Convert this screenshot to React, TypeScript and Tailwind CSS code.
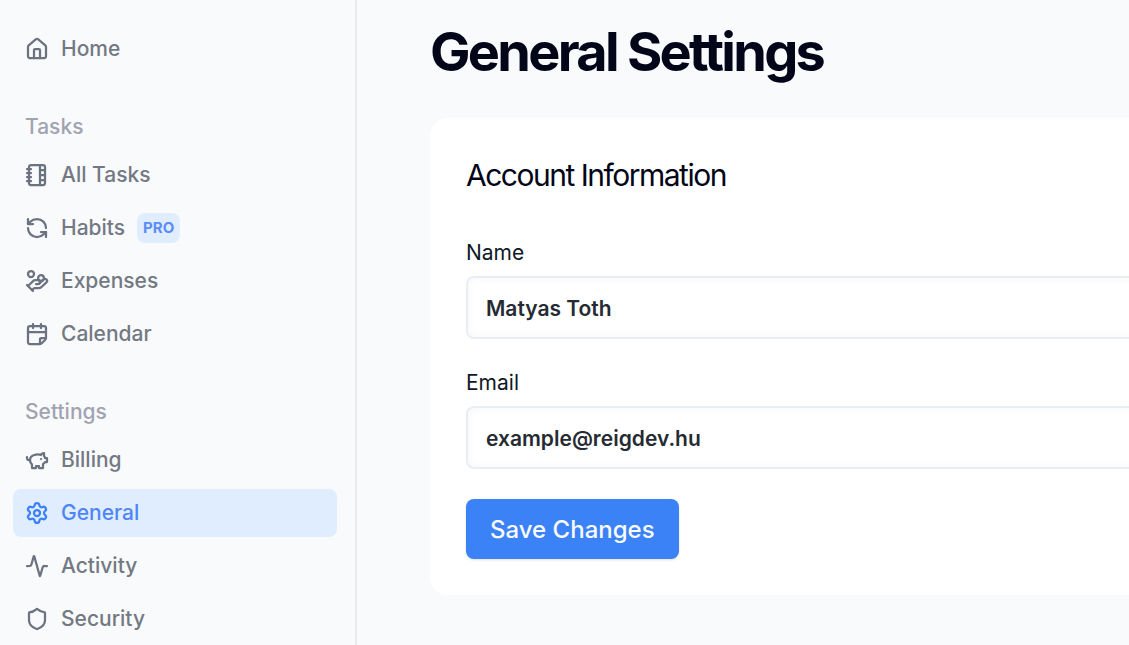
import type { ReactNode } from "react";
import {
  Activity,
  CalendarFold,
  HandCoins,
  House,
  NotebookTabs,
  RefreshCcw,
  Settings,
  Shield,
} from "lucide-react";

function PiggyBankIcon({ className }: { className?: string }) {
  return (
    <svg
      className={className}
      viewBox="0 0 24 24"
      fill="none"
      stroke="currentColor"
      strokeWidth="2.25"
      strokeLinecap="round"
      strokeLinejoin="round"
      aria-hidden="true"
    >
      <path d="M19 5c-1.5 0-2.8 1.4-3 2-3.5-1.5-11-.3-11 5 0 1.8 0 3 2 4.5V20h4v-2h3v2h4v-4c1-.5 1.7-1 2-2h2v-4h-2c0-1-.5-1.5-1-2V5z" />
      <path d="M2 9v1c0 1.1.9 2 2 2h1" />
      <path d="M16 11h.01" />
    </svg>
  );
}

function NavItem({
  icon,
  label,
  badge,
  active = false,
}: {
  icon: ReactNode;
  label: string;
  badge?: string;
  active?: boolean;
}) {
  return (
    <li>
      <a
        href="#"
        aria-current={active ? "page" : undefined}
        className={
          active
            ? "flex h-12 items-center gap-3 rounded-lg bg-[#e0edff] px-3 text-[#3b82f6]"
            : "flex h-12 items-center gap-3 rounded-lg px-3 text-[#6b7280]"
        }
      >
        {icon}
        <span className={active ? "text-[#4f86f7]" : "text-[#737982]"}>{label}</span>
        {badge && (
          <span className="flex h-[30px] items-center rounded-lg bg-[#e0edff] px-1.5 text-[15px] font-bold text-[#5a8cfa]">
            {badge}
          </span>
        )}
      </a>
    </li>
  );
}

function NavSection({ title, children }: { title: string; children: ReactNode }) {
  return (
    <section className="mt-[39px]">
      <h2 className="px-3 pb-[9px] text-[#a0a4b0]">{title}</h2>
      <ul className="flex flex-col gap-[5px]">{children}</ul>
    </section>
  );
}

function Field({
  id,
  label,
  type,
  value,
}: {
  id: string;
  label: string;
  type: string;
  value: string;
}) {
  return (
    <div className="flex flex-col gap-2">
      <label htmlFor={id} className="text-[21px] leading-[30px] text-gray-900">
        {label}
      </label>
      <input
        id={id}
        type={type}
        defaultValue={value}
        className="h-[63px] w-full rounded-lg border-2 border-[#e9eef4] bg-white px-[18px] pt-0.5 text-[21px] font-semibold text-[#262b33] shadow-[inset_0_0_10px_rgba(0,0,0,0.04)]"
      />
    </div>
  );
}

export default function App() {
  return (
    <div className="flex h-screen overflow-hidden bg-[#f9fafc] font-['Inter',sans-serif]">
      <aside className="w-[357px] shrink-0 overflow-hidden border-r-2 border-[#e9ebee] pt-[25px] pr-[18px] pl-[13px] text-[21px] leading-[30px] font-medium">
        <nav aria-label="Main">
          <ul>
            <NavItem icon={<House className="size-6" strokeWidth={2.25} />} label="Home" />
          </ul>
          <NavSection title="Tasks">
            <NavItem icon={<NotebookTabs className="size-6" strokeWidth={2.25} />} label="All Tasks" />
            <NavItem icon={<RefreshCcw className="size-6" strokeWidth={2.25} />} label="Habits" badge="PRO" />
            <NavItem icon={<HandCoins className="size-6" strokeWidth={2.25} />} label="Expenses" />
            <NavItem icon={<CalendarFold className="size-6" strokeWidth={2.25} />} label="Calendar" />
          </NavSection>
          <NavSection title="Settings">
            <NavItem icon={<PiggyBankIcon className="size-6" />} label="Billing" />
            <NavItem icon={<Settings className="size-6" strokeWidth={2.25} />} label="General" active />
            <NavItem icon={<Activity className="size-6" strokeWidth={2.25} />} label="Activity" />
            <NavItem icon={<Shield className="size-6" strokeWidth={2.25} />} label="Security" />
          </NavSection>
        </nav>
      </aside>
      <main className="min-w-0 flex-1 pt-[25px] pl-[73px]">
        <h1 className="text-[54px] leading-[54px] font-bold tracking-tighter text-slate-950">
          General Settings
        </h1>
        <form
          onSubmit={(event) => event.preventDefault()}
          className="mt-[39px] -mr-9 rounded-[18px] bg-white py-9 pl-9"
        >
          <h2 className="text-[30px] leading-[42px] tracking-tighter text-slate-950">
            Account Information
          </h2>
          <div className="mt-[42px] flex flex-col gap-[29px]">
            <Field id="name" label="Name" type="text" value="Matyas Toth" />
            <Field id="email" label="Email" type="email" value="example@reigdev.hu" />
          </div>
          <button
            type="submit"
            className="mt-[30px] h-[60px] rounded-lg bg-[#3b82f6] px-6 pt-0.5 text-2xl font-medium text-slate-50 shadow-sm"
          >
            Save Changes
          </button>
        </form>
      </main>
    </div>
  );
}
